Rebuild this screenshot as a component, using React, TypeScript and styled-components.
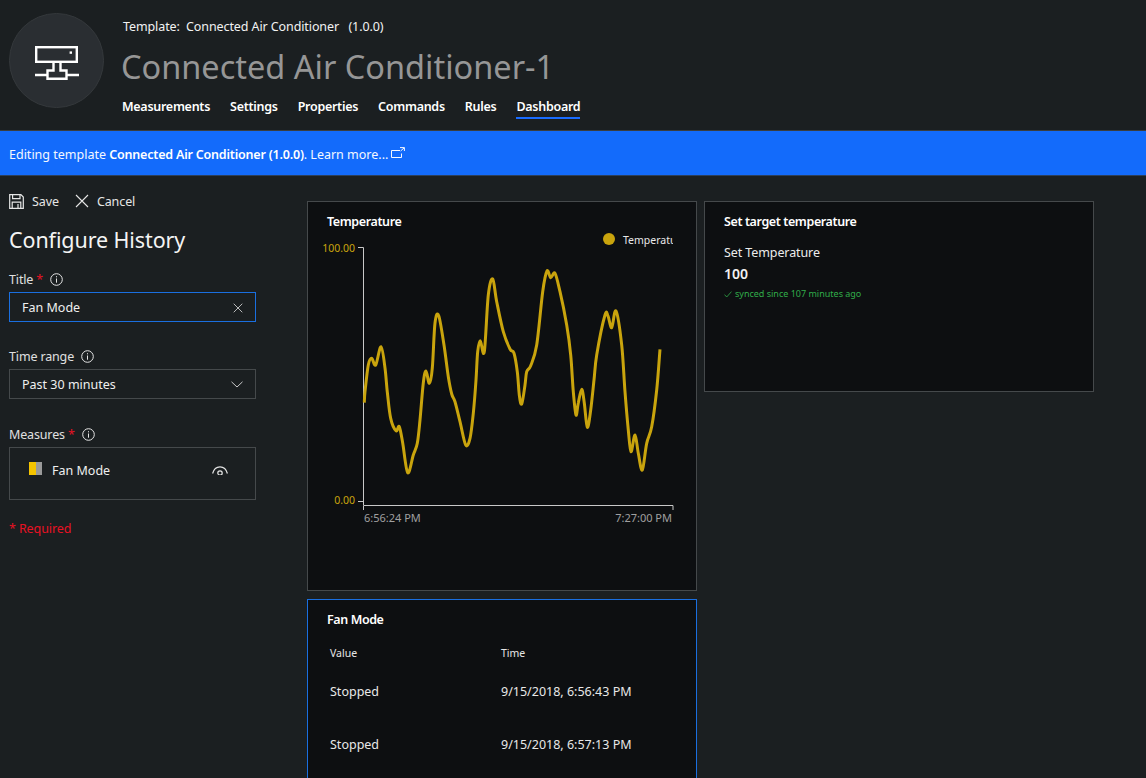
import React from 'react'
import styled, { createGlobalStyle } from 'styled-components'

const GlobalStyle = createGlobalStyle`
  html, body {
    margin: 0;
    padding: 0;
    height: 100%;
    background: #1b1f21;
    overflow: hidden;
  }
  * {
    box-sizing: border-box;
  }
`

const Page = styled.div`
  width: 1146px;
  height: 778px;
  overflow: hidden;
  background: #1b1f21;
  color: #f2f2f2;
  font-family: 'Noto Sans', 'Open Sans', sans-serif;
  font-size: 13px;
`

const Header = styled.header`
  height: 131px;
  display: flex;
  padding: 13px 0 0 9px;
  gap: 18px;
  border-bottom: 1px solid #3a3d3e;
`

const Avatar = styled.div`
  width: 95px;
  height: 95px;
  border-radius: 50%;
  background: #2a2e32;
  border: 1px solid #34383b;
  display: flex;
  align-items: center;
  justify-content: center;
  padding-top: 4px;
  flex-shrink: 0;
`

const HeaderText = styled.div`
  display: flex;
  flex-direction: column;
`

const TemplateLine = styled.div`
  font-size: 12.5px;
  line-height: 18px;
  margin: 5px 0 0 1px;
  white-space: pre;
  letter-spacing: -0.1px;
`

const DeviceName = styled.h1`
  margin: 9px 0 0 -1px;
  font-size: 32.5px;
  font-weight: 400;
  line-height: 44px;
  color: #969696;
  white-space: nowrap;
`

const Tabs = styled.nav`
  display: flex;
  gap: 20px;
  margin-top: 9px;
`

const Tab = styled.div<{ $active?: boolean }>`
  font-size: 12.5px;
  font-weight: 600;
  line-height: 18px;
  height: 21px;
  letter-spacing: -0.28px;
  color: #fff;
  border-bottom: 2px solid ${(p) => (p.$active ? '#1a6cff' : 'transparent')};
`

const Banner = styled.div`
  height: 45px;
  background: #136bfb;
  border-bottom: 1px solid #2b3f5c;
  display: flex;
  align-items: center;
  padding: 3px 0 0 9px;
  gap: 3px;
  font-size: 12.5px;
  color: #f4f8ff;
  white-space: pre;

  b {
    font-weight: 600;
    letter-spacing: -0.2px;
    color: #fff;
  }
`

const Body = styled.div`
  display: flex;
  padding-top: 15px;
`

const Sidebar = styled.aside`
  width: 307px;
  flex-shrink: 0;
  padding-left: 9px;
`

const Actions = styled.div`
  display: flex;
  align-items: center;
  height: 20px;
  gap: 16px;
`

const Action = styled.div`
  display: flex;
  align-items: center;
  gap: 8px;
  font-size: 12.5px;
  letter-spacing: -0.1px;
  color: #e6e6e6;
`

const PanelTitle = styled.h2`
  margin: 14px 0 15px;
  font-size: 21.5px;
  font-weight: 400;
  line-height: 30px;
  letter-spacing: -0.1px;
  color: #f4f4f4;
`

const Field = styled.div<{ $gap: number }>`
  width: 247px;
  margin-bottom: ${(p) => p.$gap}px;
`

const FieldLabel = styled.label`
  display: flex;
  align-items: center;
  height: 18px;
  margin-bottom: 4px;
  font-size: 12.5px;
  letter-spacing: -0.15px;
  color: #e0e0e0;
`

const Star = styled.span`
  color: #e81123;
  margin-left: 3px;
`

const InfoWrap = styled.span`
  display: inline-flex;
  margin-left: 7px;
`

const InputBox = styled.div<{ $focus?: boolean }>`
  height: 30px;
  display: flex;
  align-items: center;
  justify-content: space-between;
  padding: 1px 12px 0;
  border: 1px solid ${(p) => (p.$focus ? '#1a6fe0' : '#45494b')};
  font-size: 12.5px;
  color: #efefef;
`

const MeasureBox = styled.div`
  height: 53px;
  border: 1px solid #45494b;
  display: flex;
  align-items: flex-start;
  padding: 14px 27px 0 19px;
  font-size: 12.5px;
  color: #efefef;
`

const Swatch = styled.div`
  display: flex;
  width: 13px;
  height: 13px;
  margin-right: 10px;
  flex-shrink: 0;
`

const SwatchPart = styled.div<{ $color: string }>`
  flex: 1;
  background: ${(p) => p.$color};
`

const MeasureName = styled.span`
  flex: 1;
  line-height: 18px;
`

const RequiredNote = styled.div`
  color: #e81123;
  font-size: 12.5px;
  line-height: 18px;
  letter-spacing: -0.1px;
  margin-top: -5px;
`

const Board = styled.div`
  display: grid;
  grid-template-columns: 390px 390px;
  column-gap: 7px;
  align-items: start;
  margin-top: 10px;
`

const BoardColumn = styled.div`
  display: flex;
  flex-direction: column;
  gap: 8px;
`

const Card = styled.section<{ $height: number; $selected?: boolean }>`
  height: ${(p) => p.$height}px;
  background: #0d0f11;
  border: 1px solid ${(p) => (p.$selected ? '#1a6fe0' : '#45494b')};
  padding: 10px 19px 0;
`

const CardTitle = styled.h3`
  margin: 0;
  font-size: 12.5px;
  font-weight: 600;
  line-height: 19px;
  letter-spacing: -0.4px;
  color: #fff;
`

const ChartSvg = styled.svg`
  display: block;
  margin: -29px 0 0 -19px;
`

const Label = styled.div`
  margin-top: 13px;
  font-size: 12.5px;
  line-height: 18px;
  letter-spacing: -0.1px;
  color: #ececec;
`

const BigValue = styled.div`
  margin-top: 2px;
  font-size: 14px;
  font-weight: 600;
  line-height: 20px;
  color: #f2f2f2;
`

const Synced = styled.div`
  display: flex;
  align-items: center;
  gap: 3px;
  margin-top: 3px;
  font-size: 9px;
  line-height: 14px;
  color: #31ad4a;
`

const HistoryTable = styled.div`
  display: grid;
  grid-template-columns: 171px 1fr;
  padding-left: 3px;
  margin-top: 16px;
`

const ColHead = styled.div`
  font-size: 10.5px;
  line-height: 16px;
  margin-bottom: 22px;
  color: #e6e6e6;
`

const Cell = styled.div`
  font-size: 12.5px;
  line-height: 18px;
  height: 53px;
  color: #e8e8e8;
`

// points read off the reference, page coordinates
const curve: [number, number][] = [
  [364.3, 402.7], [365, 391.7], [368.3, 365], [371.7, 358.3], [375.7, 365], [381, 346.7], [385, 368],
  [387.3, 392], [390.7, 418.3], [396, 430.7], [399.3, 426.7], [402.7, 443], [407.7, 472.7], [413.3, 455],
  [417.3, 443.3], [420, 420], [423.3, 383], [426, 371], [429.3, 383.3], [432.3, 368], [435, 323],
  [438.7, 315.7], [444, 345], [448.3, 376.7], [451.7, 394], [455, 401.7], [460, 421.7], [465.7, 445],
  [470, 438.3], [473.3, 413.3], [476, 380], [477.7, 351.7], [480.3, 340.7], [484.3, 351.7], [488.3, 295],
  [492.7, 279], [496.7, 301.7], [503.3, 331.7], [510, 349], [514, 353.3], [517.3, 371.7], [519.3, 395],
  [521.7, 404], [525, 385], [526.7, 371.7], [530.7, 365.7], [536.7, 345], [542.7, 291.7], [547, 271],
  [550.7, 277.7], [555, 273.3], [560, 291.7], [566.7, 325], [570.7, 355], [573.3, 391.7], [576, 415],
  [578.3, 403], [581.7, 389.3], [584.3, 403], [587.3, 427.3], [590.7, 410], [594, 380], [596.7, 355],
  [605, 315], [608, 316], [611.7, 327.7], [616, 311], [621.7, 345], [625, 391.7], [628.3, 430],
  [631, 451.7], [635, 435], [638.3, 453.3], [642.3, 470], [646.7, 443.3], [651.7, 426.7], [656.7, 390],
  [660, 349.3],
]

function smoothPath(pts: [number, number][], ox: number, oy: number) {
  const p = pts.map(([x, y]) => [x - ox, y - oy])
  let d = `M${p[0][0].toFixed(1)} ${p[0][1].toFixed(1)}`
  for (let i = 0; i < p.length - 1; i++) {
    const a = p[Math.max(i - 1, 0)]
    const b = p[i]
    const c = p[i + 1]
    const e = p[Math.min(i + 2, p.length - 1)]
    const c1x = b[0] + (c[0] - a[0]) / 6
    const c1y = b[1] + (c[1] - a[1]) / 6
    const c2x = c[0] - (e[0] - b[0]) / 6
    const c2y = c[1] - (e[1] - b[1]) / 6
    d += `C${c1x.toFixed(1)} ${c1y.toFixed(1)} ${c2x.toFixed(1)} ${c2y.toFixed(1)} ${c[0].toFixed(1)} ${c[1].toFixed(1)}`
  }
  return d
}

const DeviceIcon = () => (
  <svg width="44" height="34" viewBox="0 0 44 34" fill="none" stroke="#fff" strokeWidth="2.4">
    <rect x="1.2" y="1.2" width="40.6" height="14.6" />
    <path d="M18.5 16v8.5h-6V32.8h19V24.5h-6V16M0 29h12.5M31.5 29H44" />
    <rect x="34.6" y="5.4" width="2.4" height="2.4" fill="#fff" stroke="none" />
  </svg>
)

const InfoIcon = () => (
  <svg width="13" height="13" viewBox="0 0 13 13" fill="none" stroke="#e6e6e6" strokeWidth="1">
    <circle cx="6.5" cy="6.5" r="5.8" />
    <path d="M6.5 5.5v4.2M6.5 3.2v1.1" />
  </svg>
)

const SaveIcon = () => (
  <svg width="15" height="15" viewBox="0 0 15 15" fill="none" stroke="#e6e6e6" strokeWidth="1.2">
    <path d="M.7.7h11.2l2.4 2.4v11.2H.7zM3.6.7v4h7.4v-4M3.2 14.3V8.2h8.6v6.1M9 10v4.3" />
  </svg>
)

const CrossIcon = ({ size = 14 }: { size?: number }) => (
  <svg width={size} height={size} viewBox="0 0 14 14" fill="none" stroke="#e6e6e6" strokeWidth="1.1">
    <path d="M1 1l12 12M13 1L1 13" />
  </svg>
)

const ChevronIcon = () => (
  <svg width="12" height="7" viewBox="0 0 12 7" fill="none" stroke="#c8c8c8" strokeWidth="1">
    <path d="M.5.8L6 6l5.5-5.2" />
  </svg>
)

const EyeSvg = styled.svg`
  margin-top: 4px;
`

// the lower half of the eye is cut off in the reference
const EyeIcon = () => (
  <EyeSvg width="16" height="9" viewBox="0 0 16 9" fill="none" stroke="#e6e6e6" strokeWidth="1.2">
    <path d="M.6 7.5C1.8 3 4.5.8 8 .8s6.2 2.2 7.4 6.7" />
    <circle cx="8" cy="7" r="2.2" />
  </EyeSvg>
)

const ExternalSvg = styled.svg`
  margin-top: -5px;
`

const ExternalIcon = () => (
  <ExternalSvg width="14" height="11" viewBox="0 0 14 11" fill="none" stroke="#f4f8ff" strokeWidth="1">
    <path d="M9 3.5H.5v7h10V6.5M9 .6h4.4V4M13.2.8L9.6 4" />
  </ExternalSvg>
)

const CheckIcon = () => (
  <svg width="8" height="7" viewBox="0 0 8 7" fill="none" stroke="#31ad4a" strokeWidth="0.8">
    <path d="M.5 3.6l2.2 2.4L7.5.6" />
  </svg>
)

const fontStack = "'Noto Sans', sans-serif"

const TemperatureChart = () => (
  <ChartSvg width="388" height="370" viewBox="0 0 388 370">
    <clipPath id="legendClip">
      <rect x="300" y="25" width="65" height="25" />
    </clipPath>
    <circle cx="301" cy="37" r="6" fill="#c9a40d" />
    <text x="315" y="41.5" fontSize="10.5" fill="#e8e8e8" fontFamily={fontStack} clipPath="url(#legendClip)">Temperature</text>
    <text x="47" y="50" textAnchor="end" fontSize="10.5" fill="#c9a40d" fontFamily={fontStack}>100.00</text>
    <text x="47" y="302" textAnchor="end" fontSize="10.5" fill="#c9a40d" fontFamily={fontStack}>0.00</text>
    <path d="M50 45.5h5.5V303M50 299.5h5.5M55.5 308V303.5H365V308" fill="none" stroke="#c8c8c8" strokeWidth="1" />
    <text x="56" y="320" fontSize="11" fill="#a0a0a0" fontFamily={fontStack}>6:56:24 PM</text>
    <text x="364" y="320" textAnchor="end" fontSize="11" fill="#a0a0a0" fontFamily={fontStack}>7:27:00 PM</text>
    <path d={smoothPath(curve, 308, 202)} fill="none" stroke="#c9a40d" strokeWidth="3" strokeLinejoin="round" />
  </ChartSvg>
)

export default function App() {
  return (
    <Page>
      <GlobalStyle />
      <Header>
        <Avatar>
          <DeviceIcon />
        </Avatar>
        <HeaderText>
          <TemplateLine>{'Template:  Connected Air Conditioner   (1.0.0)'}</TemplateLine>
          <DeviceName>Connected Air Conditioner-1</DeviceName>
          <Tabs>
            <Tab>Measurements</Tab>
            <Tab>Settings</Tab>
            <Tab>Properties</Tab>
            <Tab>Commands</Tab>
            <Tab>Rules</Tab>
            <Tab $active>Dashboard</Tab>
          </Tabs>
        </HeaderText>
      </Header>
      <Banner>
        <span>
          Editing template <b>Connected Air Conditioner (1.0.0)</b>. Learn more...
        </span>
        <ExternalIcon />
      </Banner>
      <Body>
        <Sidebar>
          <Actions>
            <Action>
              <SaveIcon />
              Save
            </Action>
            <Action>
              <CrossIcon />
              Cancel
            </Action>
          </Actions>
          <PanelTitle>Configure History</PanelTitle>
          <Field $gap={25}>
            <FieldLabel>
              Title<Star>*</Star>
              <InfoWrap>
                <InfoIcon />
              </InfoWrap>
            </FieldLabel>
            <InputBox $focus>
              Fan Mode
              <CrossIcon size={10} />
            </InputBox>
          </Field>
          <Field $gap={26}>
            <FieldLabel>
              Time range
              <InfoWrap>
                <InfoIcon />
              </InfoWrap>
            </FieldLabel>
            <InputBox>
              Past 30 minutes
              <ChevronIcon />
            </InputBox>
          </Field>
          <Field $gap={25}>
            <FieldLabel>
              Measures<Star>*</Star>
              <InfoWrap>
                <InfoIcon />
              </InfoWrap>
            </FieldLabel>
            <MeasureBox>
              <Swatch>
                <SwatchPart $color="#f5c400" />
                <SwatchPart $color="#9a9a9a" />
              </Swatch>
              <MeasureName>Fan Mode</MeasureName>
              <EyeIcon />
            </MeasureBox>
          </Field>
          <RequiredNote>* Required</RequiredNote>
        </Sidebar>
        <Board>
          <BoardColumn>
            <Card $height={390}>
              <CardTitle>Temperature</CardTitle>
              <TemperatureChart />
            </Card>
            <Card $height={300} $selected>
              <CardTitle>Fan Mode</CardTitle>
              <HistoryTable>
                <ColHead>Value</ColHead>
                <ColHead>Time</ColHead>
                <Cell>Stopped</Cell>
                <Cell>9/15/2018, 6:56:43 PM</Cell>
                <Cell>Stopped</Cell>
                <Cell>9/15/2018, 6:57:13 PM</Cell>
              </HistoryTable>
            </Card>
          </BoardColumn>
          <BoardColumn>
            <Card $height={191}>
              <CardTitle>Set target temperature</CardTitle>
              <Label>Set Temperature</Label>
              <BigValue>100</BigValue>
              <Synced>
                <CheckIcon />
                synced since 107 minutes ago
              </Synced>
            </Card>
          </BoardColumn>
        </Board>
      </Body>
    </Page>
  )
}
